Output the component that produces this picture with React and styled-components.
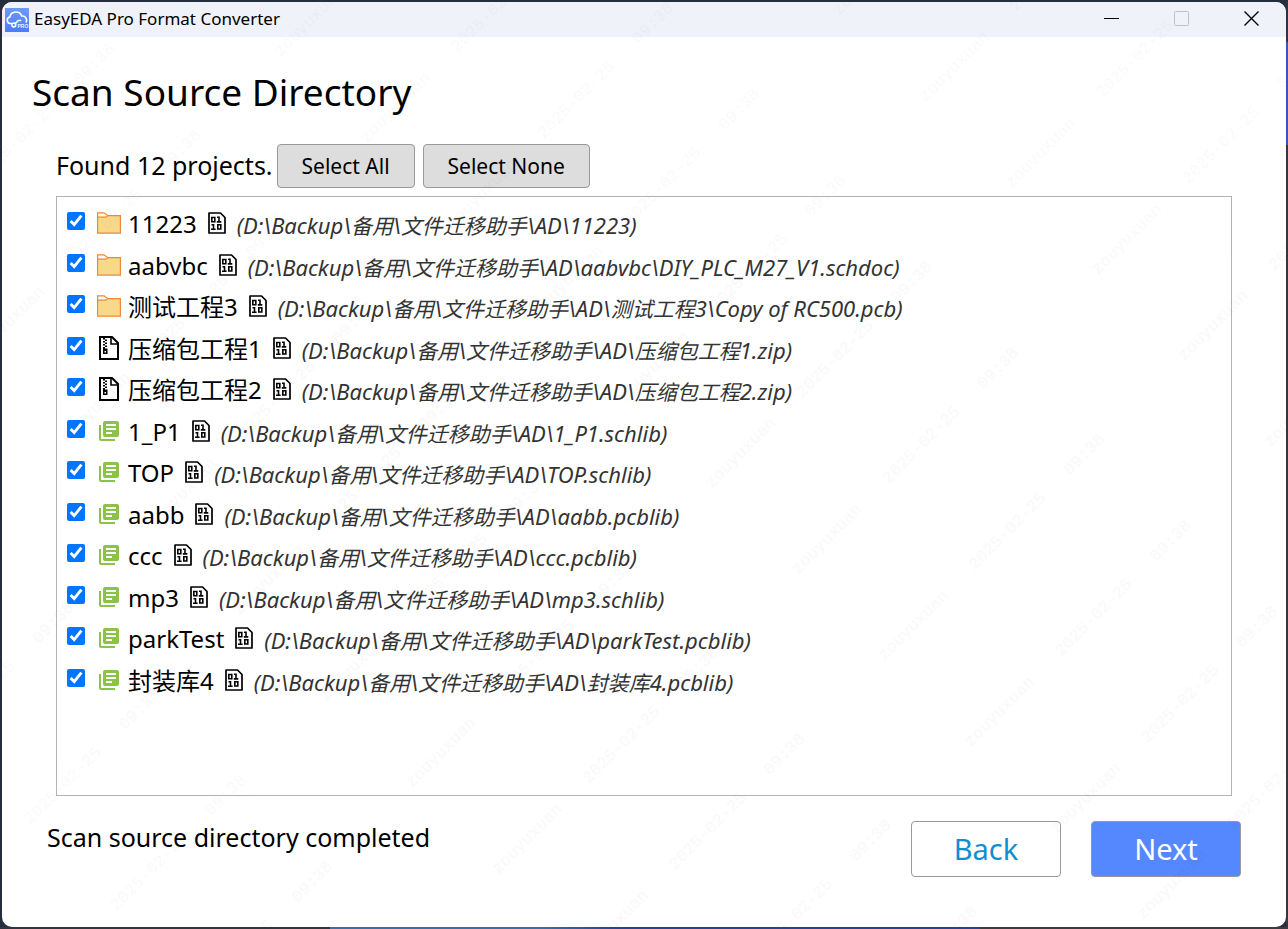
import { useState } from "react";
import styled, { createGlobalStyle, css } from "styled-components";

const uiFont = `"Noto Sans", "Open Sans", "Noto Sans CJK SC", sans-serif`;

const base = "D:\\Backup\\备用\\文件迁移助手\\AD\\";

const projects = [
    { name: "11223", kind: "folder", path: "11223" },
    { name: "aabvbc", kind: "folder", path: "aabvbc\\DIY_PLC_M27_V1.schdoc" },
    { name: "测试工程3", kind: "folder", path: "测试工程3\\Copy of RC500.pcb" },
    { name: "压缩包工程1", kind: "zip", path: "压缩包工程1.zip" },
    { name: "压缩包工程2", kind: "zip", path: "压缩包工程2.zip" },
    { name: "1_P1", kind: "library", path: "1_P1.schlib" },
    { name: "TOP", kind: "library", path: "TOP.schlib" },
    { name: "aabb", kind: "library", path: "aabb.pcblib" },
    { name: "ccc", kind: "library", path: "ccc.pcblib" },
    { name: "mp3", kind: "library", path: "mp3.schlib" },
    { name: "parkTest", kind: "library", path: "parkTest.pcblib" },
    { name: "封装库4", kind: "library", path: "封装库4.pcblib" },
];

const Logo = () => (
    <svg width="24" height="24" viewBox="0 0 24 24" aria-hidden="true">
        <defs>
            <linearGradient id="logoBg" x1="0" y1="0" x2="0" y2="1">
                <stop offset="0" stopColor="#6d9bfb" />
                <stop offset="1" stopColor="#4a7dfa" />
            </linearGradient>
        </defs>
        <rect width="24" height="24" fill="url(#logoBg)" />
        <path
            d="M6.500 15.500H5.200A3.300 3.300 0 0 1 4.800 9a6.300 6.300 0 0 1 12-1 4.200 4.200 0 0 1 4.400 6"
            fill="none"
            stroke="#fff"
            strokeWidth="1.6"
            strokeLinecap="round"
        />
        <circle cx="8.800" cy="17" r="1.900" fill="none" stroke="#fff" strokeWidth="1.500" />
        <path d="M10.200 15.600l3-3h2.500" fill="none" stroke="#fff" strokeWidth="1.500" strokeLinecap="round" />
        <text x="12.500" y="20" fontSize="5" fontWeight="700" fontFamily="Liberation Sans, sans-serif" fill="#e6eeff">
            PRO
        </text>
    </svg>
);

const FolderIcon = () => (
    <svg width="24" height="22" viewBox="0 0 24 22" aria-hidden="true">
        <path d="M.6 5.500V.8h6.500l3.500 2.700h12.700v2" fill="#fff6ef" stroke="#f0883a" strokeWidth="1.200" />
        <path d="M.6 5.200h8l2.500-1.600h12.300v17.600H.6z" fill="#f8d98c" stroke="#f0883a" strokeWidth="1.200" />
    </svg>
);

const ZipIcon = () => (
    <svg width="20" height="24" viewBox="0 0 20 24" aria-hidden="true">
        <path d="M1 1h12l6 6v16H1z" fill="#fff" stroke="#000" strokeWidth="2" />
        <path d="M12 1v7h7" fill="none" stroke="#000" strokeWidth="1.600" />
        <path
            d="M4 2h2v1.500H4zM6 3.500h2V5H6zM4 5h2v1.500H4zM6 6.500h2V8H6zM4 8h2v1.500H4zM6 9.500h2V11H6zM4 11h2v1.500H4zM4 12.500h4.500V18H4z"
            fill="#000"
        />
        <path d="M5.500 15h1.500v1.500H5.500z" fill="#fff" />
    </svg>
);

const LibraryIcon = () => (
    <svg width="20" height="20" viewBox="2 2 20 20" aria-hidden="true">
        <path
            fill="#8bc34a"
            d="M4 6H2v14a2 2 0 0 0 2 2h14v-2H4zM20 2H8a2 2 0 0 0-2 2v12a2 2 0 0 0 2 2h12a2 2 0 0 0 2-2V4a2 2 0 0 0-2-2m-1 9H9V9h10zm-4 4H9v-2h6zm4-8H9V5h10z"
        />
    </svg>
);

const BinaryIcon = () => (
    <svg width="18" height="22" viewBox="0 0 18 22" aria-hidden="true">
        <g fill="none" stroke="#000">
            <path d="M1 1h11.500L17 5.500V21H1z" strokeWidth="1.700" strokeLinejoin="round" />
            <path
                d="M3.800 5.500h3v4.200h-3zM9 5.300h2v4.400M8.800 9.900h4.500M3.500 12.800h2v4.200M3 17.200h4.600M9.800 12.800h3v4.200h-3z"
                strokeWidth="1.600"
            />
        </g>
    </svg>
);

const icons = { folder: FolderIcon, zip: ZipIcon, library: LibraryIcon };

const App = () => {
    const [selected, setSelected] = useState(projects.map(() => true));

    const setAll = (value) => setSelected(projects.map(() => value));
    const toggle = (index) => setSelected(selected.map((s, i) => (i === index ? !s : s)));

    return (
        <Desktop>
            <GlobalStyle />
            <Window>
                <TitleBar>
                    <Logo />
                    <AppName>EasyEDA Pro Format Converter</AppName>
                    <CaptionButton aria-label="Minimize">
                        <svg width="15" height="15" viewBox="0 0 15 15">
                            <path d="M0 7.500h15" stroke="#000" />
                        </svg>
                    </CaptionButton>
                    <CaptionButton aria-label="Maximize" disabled>
                        <svg width="15" height="15" viewBox="0 0 15 15">
                            <rect x=".5" y=".5" width="14" height="14" rx="1" fill="none" stroke="#bfc1c7" />
                        </svg>
                    </CaptionButton>
                    <CaptionButton aria-label="Close">
                        <svg width="15" height="15" viewBox="0 0 15 15">
                            <path d="M.5.5l14 14M14.500.5l-14 14" stroke="#000" strokeWidth="1.400" />
                        </svg>
                    </CaptionButton>
                </TitleBar>

                <Content>
                    <Title>Scan Source Directory</Title>
                    <Toolbar>
                        <Found>Found 12 projects.</Found>
                        <SmallButton onClick={() => setAll(true)}>Select All</SmallButton>
                        <SmallButton onClick={() => setAll(false)}>Select None</SmallButton>
                    </Toolbar>
                    <ProjectList>
                        {projects.map((item, index) => {
                            const Icon = icons[item.kind];
                            return (
                                <Project key={item.name}>
                                    <Label>
                                        <Checkbox
                                            type="checkbox"
                                            checked={selected[index]}
                                            onChange={() => toggle(index)}
                                        />
                                        <IconSlot>
                                            <Icon />
                                        </IconSlot>
                                        <Name>{item.name}</Name>
                                        <BinaryIcon />
                                        <Path>
                                            {/* odd parts are the Chinese runs */}
                                            {`(${base}${item.path})`
                                                .split(/([\u4e00-\u9fff]+)/)
                                                .map((part, i) => (i % 2 ? <Han key={i}>{part}</Han> : part))}
                                        </Path>
                                    </Label>
                                </Project>
                            );
                        })}
                    </ProjectList>
                </Content>

                <Footer>
                    <Status>Scan source directory completed</Status>
                    <NavButton>Back</NavButton>
                    <NavButton $primary>Next</NavButton>
                </Footer>

                <Watermark aria-hidden="true">
                    <defs>
                        <pattern
                            id="mark"
                            width="424"
                            height="122"
                            patternUnits="userSpaceOnUse"
                            patternTransform="translate(-3 3) rotate(-45)"
                        >
                            <text x="162" y="114">zouyuxuan</text>
                            <text x="290" y="114">2025-02-25</text>
                            <text x="0" y="114">09:38</text>
                        </pattern>
                    </defs>
                    <rect width="100%" height="100%" fill="url(#mark)" />
                </Watermark>
            </Window>
        </Desktop>
    );
};

export default App;

const GlobalStyle = createGlobalStyle`
    * {
        box-sizing: border-box;
    }
    body {
        margin: 0;
        font-family: ${uiFont};
        color: #000;
    }
    button {
        font-family: inherit;
        cursor: pointer;
    }
`;

const Desktop = styled.div`
    min-height: 100vh;
    display: flex;
    padding: 2px;
    background:
        linear-gradient(90deg, #2f3440 0 330px, #3a6ea8 330px 540px, #2b3f93 620px 980px, #3a3a40 980px) bottom / 100% 2px
            no-repeat,
        linear-gradient(#2c3444 0 42px, #3557b5 42px 145px, #33363d 145px) right / 2px 100% no-repeat,
        #262e3e;
`;

const Window = styled.div`
    position: relative;
    flex: 1;
    display: flex;
    flex-direction: column;
    overflow: hidden;
    border-radius: 10px;
    background: #fff;
`;

const TitleBar = styled.header`
    display: flex;
    align-items: center;
    height: 35px;
    padding-left: 3px;
    background: #eff2f9;
`;

const AppName = styled.span`
    flex: 1;
    padding: 0 0 2px 5px;
    font-size: 17px;
    line-height: 24px;
`;

const CaptionButton = styled.button`
    display: flex;
    align-items: center;
    justify-content: center;
    width: 70px;
    height: 35px;
    padding: 0 0 2px 1px;
    border: none;
    background: transparent;
`;

const Content = styled.main`
    flex: 1;
    display: flex;
    flex-direction: column;
    padding: 28px 54px 0;
`;

const Title = styled.h1`
    margin: 0 0 25px -24px;
    font-size: 37px;
    font-weight: 400;
    line-height: 54px;
`;

const Toolbar = styled.div`
    display: flex;
    align-items: center;
    gap: 8px;
    margin-bottom: 8px;
`;

const Found = styled.span`
    margin-right: -4px;
    padding-bottom: 2px;
    font-size: 25px;
    line-height: 36px;
`;

const SmallButton = styled.button`
    height: 44px;
    padding: 0 24px;
    border: 1px solid #999;
    border-radius: 4px;
    background: #ddd;
    color: #000;
    font-size: 21px;
`;

const ProjectList = styled.ul`
    flex: 1;
    margin: 0;
    padding: 5px 10px;
    border: 1px solid #b4b4b4;
    list-style: none;
    overflow: auto;
`;

const Project = styled.li`
    height: 42px;

    &:nth-child(even) {
        height: 41px;
    }
`;

const Label = styled.label`
    display: flex;
    align-items: center;
    height: 41px;
    white-space: nowrap;
`;

const Checkbox = styled.input`
    width: 18px;
    height: 18px;
    margin: 0 12px 4px 0;
    accent-color: #0075ff;
`;

const IconSlot = styled.span`
    display: flex;
    justify-content: center;
    width: 24px;
    margin-right: 7px;
`;

const Name = styled.span`
    margin-right: 11px;
    padding-top: 2px;
    font-size: 24px;
    line-height: 36px;
`;

const Path = styled.i`
    margin-left: 11px;
    padding-top: 6px;
    color: #333;
    font-size: 22px;
    line-height: 30px;
`;

const Han = styled.span`
    font-size: 21px;
`;

const Footer = styled.footer`
    display: flex;
    align-items: flex-start;
    gap: 30px;
    padding: 25px 45px 50px;
`;

const Status = styled.p`
    flex: 1;
    margin: 0;
    font-size: 25px;
    line-height: 32px;
`;

const NavButton = styled.button`
    width: 150px;
    height: 56px;
    padding: 0 0 2px;
    border: 1px solid #999;
    border-radius: 4px;
    background: #fff;
    color: #0f8fd0;
    font-size: 29px;

    ${(props) =>
        props.$primary &&
        css`
            background: #5588ff;
            color: #fff;
        `}
`;

const Watermark = styled.svg`
    position: absolute;
    inset: 0;
    width: 100%;
    height: 100%;
    pointer-events: none;
    opacity: 0.025;

    text {
        font-family: "Liberation Mono", monospace;
        font-size: 17px;
    }
`;
